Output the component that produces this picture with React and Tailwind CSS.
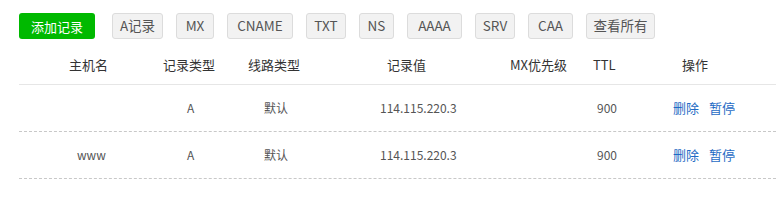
import React from 'react';

const tipos = [
  { nome: 'A记录', w: 'w-[51px]' },
  { nome: 'MX', w: 'w-[38px]' },
  { nome: 'CNAME', w: 'w-[66px]' },
  { nome: 'TXT', w: 'w-[40px]' },
  { nome: 'NS', w: 'w-[35px]' },
  { nome: 'AAAA', w: 'w-[55px]' },
  { nome: 'SRV', w: 'w-[40px]' },
  { nome: 'CAA', w: 'w-[45px]' },
  { nome: '查看所有', w: 'w-[69px]' },
];

const registros = [
  { id: 1, host: '', tipo: 'A', linha: '默认', valor: '114.115.220.3', mx: '', ttl: '900' },
  { id: 2, host: 'www', tipo: 'A', linha: '默认', valor: '114.115.220.3', mx: '', ttl: '900' },
];

export default function App() {
  return (
    <div
      className="w-[776px] h-[211px] bg-white pl-[19px] pt-[13px] overflow-hidden"
      style={{ fontFamily: '"Noto Sans CJK SC", "Liberation Sans", sans-serif' }}
    >
      {/* Barra de filtros */}
      <div className="flex items-center">
        <button className="w-[76px] h-[26px] rounded-[3px] bg-[#00b900] text-white text-[13px] leading-none mr-[17px]">
          添加记录
        </button>
        <div className="flex gap-[13px]">
          {tipos.map(t => (
            <button
              key={t.nome}
              className={`${t.w} h-[26px] rounded-[3px] border border-[#dcdcdc] bg-[#f2f2f2] text-[#555] text-[13.5px] leading-none`}
            >
              {t.nome}
            </button>
          ))}
        </div>
      </div>

      {/* Cabeçalho da tabela */}
      <div className="grid grid-cols-[94px_85px_139px_123px_83px_89px_1fr] pl-[50px] pt-[16px] pb-[9px] border-b border-[#e6e6e6] text-[13px] leading-[20px] text-[#333]">
        <div>主机名</div>
        <div>记录类型</div>
        <div>线路类型</div>
        <div>记录值</div>
        <div>MX优先级</div>
        <div>TTL</div>
        <div>操作</div>
      </div>

      {/* Linhas */}
      {registros.map(r => (
        <div
          key={r.id}
          className="grid grid-cols-[110px_77px_116px_130px_87px_76px_1fr] items-center pl-[58px] h-[47px] border-b border-dashed border-[#c8c8c8] text-[12px] text-[#555]"
        >
          <div>{r.host}</div>
          <div>{r.tipo}</div>
          <div>{r.linha}</div>
          <div>{r.valor}</div>
          <div>{r.mx}</div>
          <div>{r.ttl}</div>
          <div className="flex gap-[10px] text-[13px] text-[#1f6bc4]">
            <a>删除</a>
            <a>暂停</a>
          </div>
        </div>
      ))}
    </div>
  );
}
